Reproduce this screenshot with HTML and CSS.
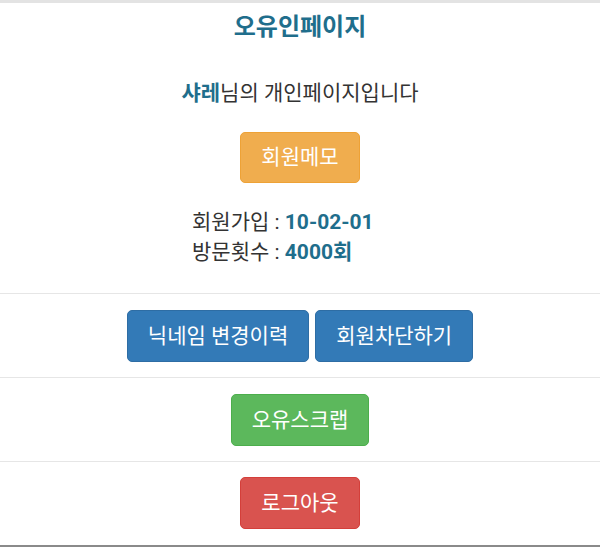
FILE: index.html
```html
<!DOCTYPE html>
<html lang="ko">
<head>
<meta charset="utf-8">
<title>오유인페이지</title>
<link rel="stylesheet" href="styles.css">
</head>
<body>
<div class="topbar"></div>
<main class="page">
  <section class="profile">
    <h1 class="title">오유인페이지</h1>
    <p class="greeting"><strong class="nick">샤레</strong>님의 개인페이지입니다</p>
    <div class="row"><a class="btn btn-warning">회원메모</a></div>
    <ul class="info">
      <li>회원가입 : <b class="val">10-02-01</b></li>
      <li>방문횟수 : <b class="val">4000회</b></li>
    </ul>
  </section>
  <section class="block">
    <div class="row">
      <a class="btn btn-primary">닉네임 변경이력</a>
      <a class="btn btn-primary">회원차단하기</a>
    </div>
  </section>
  <section class="block">
    <div class="row"><a class="btn btn-success">오유스크랩</a></div>
  </section>
  <section class="block last">
    <div class="row"><a class="btn btn-danger">로그아웃</a></div>
  </section>
</main>
</body>
</html>
```

FILE: styles.css
```css
html, body {
  margin: 0;
  padding: 0;
  background: #ffffff;
}
body {
  font-family: Roboto, "Noto Sans CJK KR", sans-serif;
  color: #333333;
  width: 600px;
  height: 548px;
  overflow: hidden;
}
.topbar {
  height: 3px;
  background: #e3e3e3;
}
.page {
  display: flex;
  flex-direction: column;
}
.profile {
  text-align: center;
  padding-bottom: 26px;
}
.title {
  margin: 9px 0 0;
  font-size: 24px;
  line-height: 30px;
  font-weight: 700;
  color: #1f6e8c;
}
.greeting {
  margin: 37px 0 0;
  font-size: 21px;
  line-height: 28px;
}
.nick {
  color: #1f6e8c;
  font-weight: 700;
}
.row {
  display: flex;
  justify-content: center;
  gap: 6px;
}
.profile .row {
  margin-top: 25px;
}
.info {
  list-style: none;
  width: 216px;
  margin: 24px auto 0;
  padding: 0;
  text-align: left;
  font-size: 21px;
  line-height: 30px;
  white-space: nowrap;
}
.val {
  color: #1f6e8c;
  font-weight: 700;
}
.block {
  border-top: 1px solid #e6e6e6;
  padding: 16px 0 15px;
}
.block.last {
  padding: 15px 0 16px;
  border-bottom: 2px solid #8a8a8a;
}
.btn {
  display: inline-block;
  height: 52px;
  box-sizing: border-box;
  padding: 0 20px;
  line-height: 50px;
  font-size: 21px;
  color: #ffffff;
  border: 1px solid transparent;
  border-radius: 5px;
  text-decoration: none;
}
.btn-warning {
  background: #f0ad4e;
  border-color: #eea236;
  height: 51px;
  line-height: 49px;
}
.btn-primary {
  background: #337ab7;
  border-color: #2e6da4;
}
.btn-success {
  background: #5cb85c;
  border-color: #4cae4c;
}
.btn-danger {
  background: #d9534f;
  border-color: #d43f3a;
}
```
